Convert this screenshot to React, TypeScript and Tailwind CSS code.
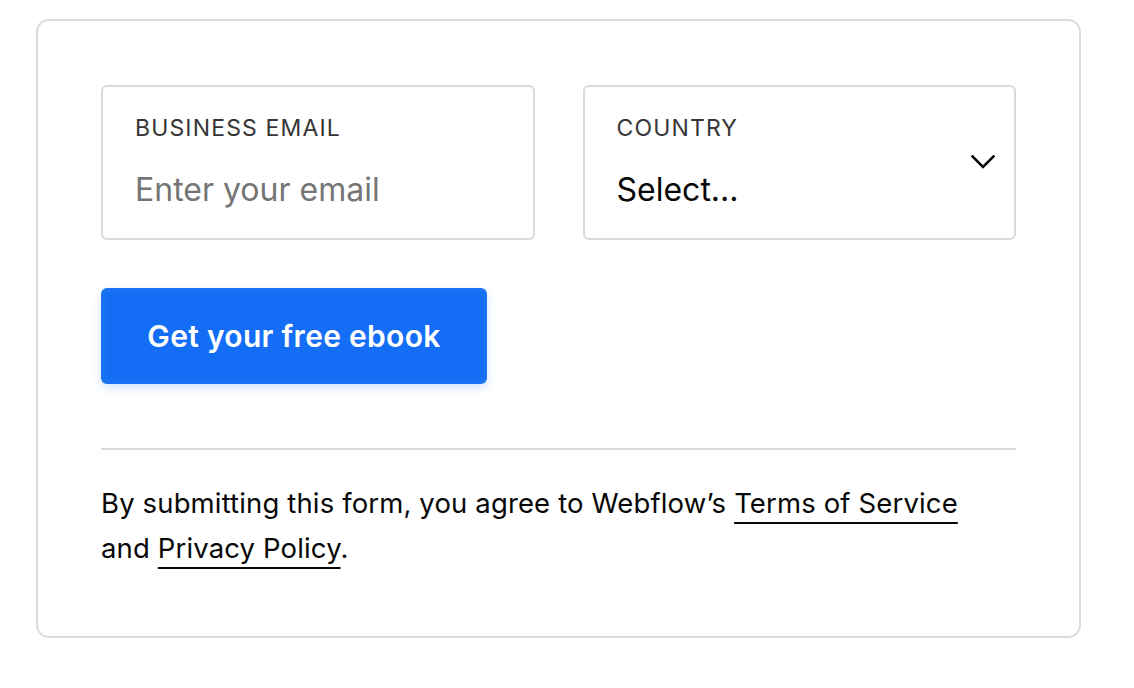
function Field({ label, children, right }: { label: string; children: React.ReactNode; right?: React.ReactNode }) {
  return (
    <label className="relative flex h-[155px] flex-1 flex-col rounded-[6px] border-2 border-[#dadada] bg-white px-[32px] pt-[26px]">
      <span className="text-[23px] leading-[30px] tracking-[0.05em] text-[#363636]">{label}</span>
      <span className="mt-[26px] text-[32px] leading-[42px]">{children}</span>
      {right}
    </label>
  );
}

export default function App() {
  return (
    <div className="min-h-[688px] bg-white pl-[36px] pt-[19px] font-['Inter',sans-serif] text-[#080808]">
      <div className="w-[1045px] rounded-[13px] border-2 border-[#dcdcdc] bg-white px-[63px] pb-[65px] pt-[64px]">
        <div className="flex gap-[48px]">
          <Field label="BUSINESS EMAIL">
            <span className="text-[#757575]">Enter your email</span>
          </Field>
          <Field
            label="COUNTRY"
            right={
              <svg className="absolute right-[19px] top-[68px]" width="24" height="14" viewBox="0 0 24 14" fill="none">
                <polyline points="1.5,1.5 12,12 22.5,1.5" stroke="#080808" strokeWidth="2.6" strokeLinecap="square" />
              </svg>
            }
          >
            Select...
          </Field>
        </div>

        <button className="mt-[48px] h-[96px] w-[386px] rounded-[6px] bg-[#146ef5] text-[30px] font-semibold tracking-[0.01em] text-white shadow-[0_4px_10px_rgba(20,110,245,0.18),inset_0_0_10px_rgba(255,255,255,0.08)]">
          Get your free ebook
        </button>

        <div className="mt-[64px] border-t-2 border-[#dadada]" />

        <p className="mt-[31px] w-[880px] text-[27.5px] leading-[45px] tracking-[0.005em]">
          By submitting this form, you agree to Webflow’s{" "}
          <a className="underline decoration-2 underline-offset-[9px]">Terms of Service</a>{" "}
          and <a className="underline decoration-2 underline-offset-[9px]">Privacy Policy</a>.
        </p>
      </div>
    </div>
  );
}
